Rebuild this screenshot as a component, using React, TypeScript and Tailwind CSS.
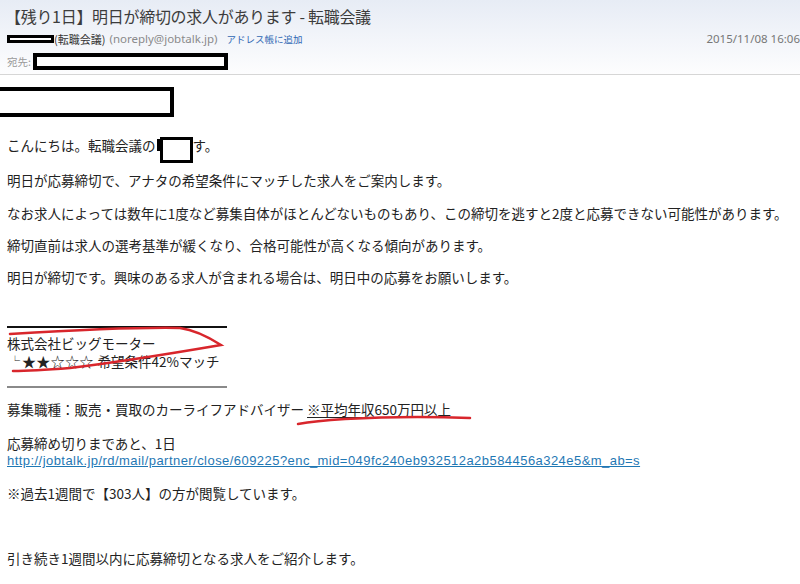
import React from 'react';

const JP = "font-['Noto_Sans_CJK_JP',sans-serif]";

function Header() {
    return (
        <div className="h-[75px] border-b border-[#d6d6d6] bg-gradient-to-b from-[#e7ecf5] to-[#fdfdfe] px-[5px] pt-[6px]">
            <h1 className={`${JP} text-[16px] leading-[20px] tracking-[-0.3px] text-[#3c3c3c] whitespace-nowrap`}>
                【残り1日】明日が締切の求人があります - 転職会議
            </h1>
            <div className="mt-[5px] flex h-[16px] items-center whitespace-nowrap">
                <div className="ml-[2px] h-[8px] w-[47px] border-[3px] border-black bg-white" />
                <span className={`${JP} text-[11px] text-[#333]`}>(転職会議)</span>
                <span className="ml-[4px] font-['Noto_Sans',sans-serif] text-[11.5px] text-[#8a8a8a]">(noreply@jobtalk.jp)</span>
                <span className={`${JP} ml-[9px] text-[9.5px] text-[#2f67b3]`}>アドレス帳に追加</span>
                <span className="ml-auto mr-[-5px] font-['Noto_Sans',sans-serif] text-[11.5px] text-[#777]">2015/11/08 16:06</span>
            </div>
            <div className="mt-[6px] flex h-[17px] items-center whitespace-nowrap">
                <span className={`${JP} ml-[2px] text-[10.5px] text-[#999]`}>宛先:</span>
                <div className="ml-[2px] h-[17px] w-[195px] border-4 border-black bg-white" />
            </div>
        </div>
    );
}

function Line({ className = '', children }: { className?: string; children: React.ReactNode }) {
    return <div className={`h-[18px] leading-[18px] whitespace-nowrap ${className}`}>{children}</div>;
}

export default function App() {
    return (
        <div className="relative h-[584px] w-[800px] overflow-hidden bg-white">
            <Header />

            <div className={`${JP} px-[7px] text-[13.5px] text-[#222]`}>
                <div className="ml-[-12px] mt-[12px] h-[30px] w-[179px] border-4 border-black" />

                <div className="mt-[19px] flex h-[18px] items-start leading-[18px] whitespace-nowrap">
                    <span>こんにちは。転職会議の</span>
                    <span className="ml-[1px] mt-[3px] h-[12px] w-[3px] bg-black" />
                    <span className="mt-[1px] h-[26px] w-[33px] shrink-0 border-[3px] border-black bg-white" />
                    <span>す。</span>
                </div>
                <Line className="mt-[17px]">明日が応募締切で、アナタの希望条件にマッチした求人をご案内します。</Line>
                <Line className="mt-[15px]">なお求人によっては数年に1度など募集自体がほとんどないものもあり、この締切を逃すと2度と応募できない可能性があります。</Line>
                <Line className="mt-[14px]">締切直前は求人の選考基準が緩くなり、合格可能性が高くなる傾向があります。</Line>
                <Line className="mt-[14px]">明日が締切です。興味のある求人が含まれる場合は、明日中の応募をお願いします。</Line>

                <div className="mt-[40px] h-[2px] w-[220px] bg-[#111]" />
                <Line className="mt-[6px]">株式会社ビッグモーター</Line>
                <div className="flex h-[18px] items-center pl-[3px] leading-[18px] whitespace-nowrap">
                    <span className="w-[12px] text-[10px]">└</span>
                    <span className="text-[14px] leading-[18px] tracking-[0.3px]">★★☆☆☆</span>
                    <span className="ml-[4px]">希望条件42%マッチ</span>
                </div>
                <div className="mt-[16px] h-[2px] w-[220px] bg-[#8a8a8a]" />

                <Line className="mt-[12px]">
                    募集職種：販売・買取のカーライフアドバイザー <span className="underline underline-offset-2">※平均年収650万円以上</span>
                </Line>
                <Line className="mt-[16px]">応募締め切りまであと、1日</Line>
                <div className="mt-[1px] h-[16px] font-['Liberation_Sans',sans-serif] text-[13px] leading-[16px] tracking-[0.45px] whitespace-nowrap text-[#1f78b4] underline">
                    http://jobtalk.jp/rd/mail/partner/close/609225?enc_mid=049fc240eb932512a2b584456a324e5&amp;m_ab=s
                </div>
                <Line className="mt-[15px]">※過去1週間で【303人】の方が閲覧しています。</Line>
                <Line className="mt-[47px]">引き続き1週間以内に応募締切となる求人をご紹介します。</Line>
            </div>

            {/* red pen marks */}
            <svg className="pointer-events-none absolute left-0 top-0" width="800" height="584" viewBox="0 0 800 584">
                <path
                    d="M10 334 C 60 331, 130 327, 180 328 C 195 330, 210 338, 221 345 C 180 352, 120 362, 70 368 C 45 370, 25 371, 13 371"
                    fill="none"
                    stroke="#d8262c"
                    strokeWidth="2.5"
                    strokeLinecap="round"
                />
                <path
                    d="M298 424 C 315 421, 330 420, 345 419 C 380 417, 420 416, 470 418"
                    fill="none"
                    stroke="#d8262c"
                    strokeWidth="2.5"
                    strokeLinecap="round"
                />
            </svg>
        </div>
    );
}
